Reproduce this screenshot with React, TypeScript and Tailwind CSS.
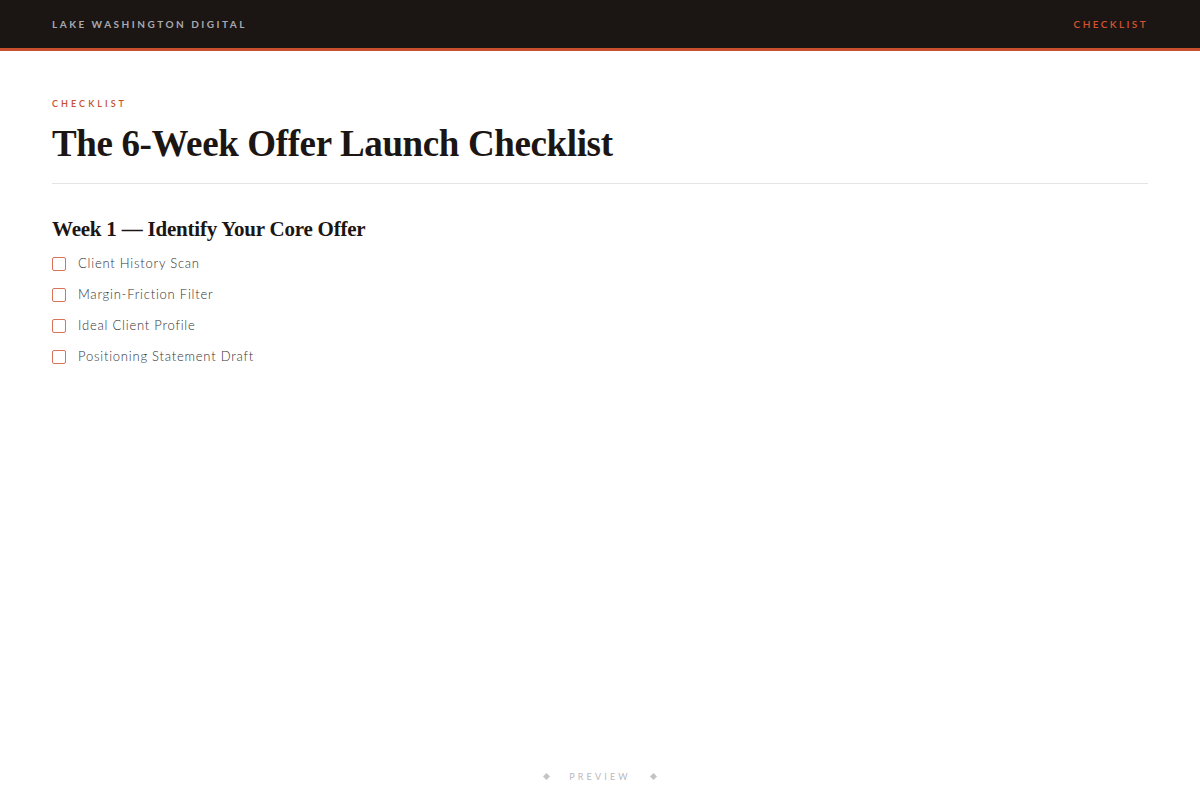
import React from 'react';

const items = [
  'Client History Scan',
  'Margin-Friction Filter',
  'Ideal Client Profile',
  'Positioning Statement Draft',
];

const serif = { fontFamily: '"Liberation Serif", "DejaVu Serif", serif' };

export default function App() {
  return (
    <div className="min-h-screen flex flex-col bg-white" style={{ fontFamily: 'Lato, "Noto Sans", sans-serif' }}>
      <header className="h-[51px] bg-[#1b1613] border-b-[3px] border-[#c8502e] flex items-center justify-between px-[52px]">
        <span className="text-[10px] font-bold tracking-[0.25em] text-[#a9a9b0]">LAKE WASHINGTON DIGITAL</span>
        <span className="text-[10px] font-semibold tracking-[0.24em] text-[#d4532f]">CHECKLIST</span>
      </header>

      <main className="flex-1 px-[52px] pt-[46px]">
        <div className="text-[9px] font-semibold tracking-[0.34em] text-[#c8502e]">CHECKLIST</div>
        <h1 className="mt-[12px] text-[37px] leading-[42px] font-bold text-[#1b1613] tracking-[-0.01em]" style={serif}>
          The 6-Week Offer Launch Checklist
        </h1>
        <div className="mt-[18px] h-px bg-[#e4e4e4]" />

        <h2 className="mt-[32px] text-[21px] leading-[26px] font-bold text-[#1b1613] tracking-[-0.01em]" style={serif}>
          Week 1 — Identify Your Core Offer
        </h2>
        <ul className="mt-[13px] flex flex-col gap-[13px]">
          {items.map((item) => (
            <li key={item} className="flex items-center gap-[12px] h-[18px]">
              <span className="w-[14px] h-[14px] rounded-[2px] border border-[#d9745a] bg-white shrink-0" />
              <span className="text-[13px] font-light text-[#333333] tracking-[0.06em]">{item}</span>
            </li>
          ))}
        </ul>
      </main>

      <footer className="h-[46px] flex items-center justify-center gap-[18px] pb-[1px]">
        <span className="w-[5px] h-[5px] rotate-45 bg-[#c4c4c4]" />
        <span className="text-[9px] tracking-[0.35em] text-[#b9b9be] px-[2px]">PREVIEW</span>
        <span className="w-[5px] h-[5px] rotate-45 bg-[#c4c4c4]" />
      </footer>
    </div>
  );
}
